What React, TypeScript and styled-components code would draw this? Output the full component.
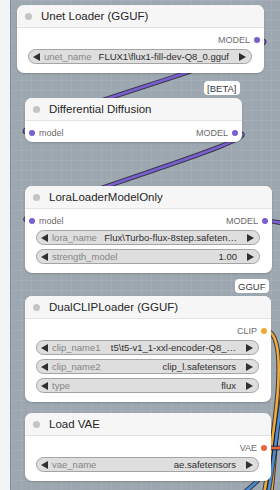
import React from "react";
import styled, { createGlobalStyle } from "styled-components";

const GlobalStyle = createGlobalStyle`
  html, body { margin: 0; padding: 0; }
  body {
    width: 280px;
    height: 490px;
    overflow: hidden;
    font-family: "Liberation Sans", Arial, sans-serif;
  }
`;

const Page = styled.div`
  display: flex;
  width: 280px;
  height: 490px;
`;

const Sidebar = styled.div`
  width: 10px;
  flex-shrink: 0;
  background: #f3f4f4;
  border-right: 1px solid #7e8891;
`;

const Canvas = styled.div`
  position: relative;
  flex: 1;
  overflow: hidden;
  background-color: #9da7b0;
  background-image:
    linear-gradient(rgba(255, 255, 255, 0.07) 1px, transparent 1px),
    linear-gradient(90deg, rgba(255, 255, 255, 0.07) 1px, transparent 1px);
  background-size: 10px 10px;
`;

const Wires = styled.svg`
  position: absolute;
  left: 0;
  top: 0;
  width: 269px;
  height: 490px;
`;

const NodeBox = styled.div<{ $x: number; $y: number; $w: number }>`
  position: absolute;
  left: ${(p) => p.$x - 11}px;
  top: ${(p) => p.$y}px;
  width: ${(p) => p.$w}px;
  background: #ffffff;
  border-radius: 7px;
  box-shadow: 0 1px 2px rgba(0, 0, 0, 0.18);
  display: flex;
  flex-direction: column;
`;

const Title = styled.div`
  height: 23px;
  display: flex;
  align-items: center;
  padding-left: 8px;
  gap: 9px;
  background: #f6f6f6;
  border-bottom: 1px solid #e2e2e2;
  border-radius: 7px 7px 0 0;
  box-sizing: border-box;
`;

const TitleDot = styled.span`
  width: 7px;
  height: 7px;
  border-radius: 50%;
  background: #c4c4c4;
`;

const TitleText = styled.span`
  font-size: 11.5px;
  color: #262626;
  white-space: nowrap;
`;

const Body = styled.div<{ $pb: number }>`
  display: flex;
  flex-direction: column;
  padding: 5px 0 ${(p) => p.$pb}px;
`;

const SlotRow = styled.div`
  height: 14px;
  display: flex;
  align-items: center;
  justify-content: space-between;
  padding: 0 4px;
  margin-bottom: 2px;
`;

const Slot = styled.div`
  display: flex;
  align-items: center;
  gap: 4px;
  font-size: 9px;
  color: #6b6b6b;
`;

const SlotDot = styled.span<{ $c: string }>`
  width: 6px;
  height: 6px;
  border-radius: 50%;
  background: ${(p) => p.$c};
`;

const Widget = styled.div`
  height: 15px;
  box-sizing: border-box;
  margin: 0 12px 4px 11px;
  border: 1px solid #a4a4a4;
  background: #dedede;
  border-radius: 8px;
  display: flex;
  align-items: center;
  font-size: 9.5px;
  white-space: nowrap;
  &:last-child { margin-bottom: 0; }
`;

const Arrow = styled.svg<{ $side: "l" | "r" }>`
  width: 7px;
  height: 8px;
  flex-shrink: 0;
  margin: ${(p) => (p.$side === "l" ? "0 4px 0 4px" : "0 5px 0 10px")};
`;

const WLabel = styled.span`
  color: #858585;
`;

const WValue = styled.span`
  flex: 1;
  text-align: right;
  color: #2e2e2e;
  margin-left: 4px;
`;

const Badge = styled.div`
  position: absolute;
  right: 2px;
  bottom: calc(100% + 3px);
  height: 14px;
  padding: 0 3.5px;
  background: #ffffff;
  border-radius: 4px;
  font-size: 9.5px;
  color: #3a3a3a;
  display: flex;
  align-items: center;
`;

type W = { label: string; value: string };
type N = {
  title: string;
  x: number;
  y: number;
  w: number;
  input?: { name: string; color: string };
  output: { name: string; color: string };
  widgets: W[];
  badge?: string;
};

const PURPLE = "#7a5fd0";
const ORANGE = "#f0aa34";
const VAE = "#e8663f";

const nodes: N[] = [
  {
    title: "Unet Loader (GGUF)",
    x: 17,
    y: 5,
    w: 247,
    output: { name: "MODEL", color: PURPLE },
    widgets: [{ label: "unet_name", value: "FLUX1\\flux1-fill-dev-Q8_0.gguf" }],
  },
  {
    title: "Differential Diffusion",
    x: 25,
    y: 98,
    w: 217,
    input: { name: "model", color: PURPLE },
    output: { name: "MODEL", color: PURPLE },
    widgets: [],
    badge: "[BETA]",
  },
  {
    title: "LoraLoaderModelOnly",
    x: 25,
    y: 186,
    w: 247,
    input: { name: "model", color: PURPLE },
    output: { name: "MODEL", color: PURPLE },
    widgets: [
      { label: "lora_name", value: "Flux\\Turbo-flux-8step.safeten…" },
      { label: "strength_model", value: "1.00" },
    ],
  },
  {
    title: "DualCLIPLoader (GGUF)",
    x: 25,
    y: 296,
    w: 246,
    output: { name: "CLIP", color: ORANGE },
    widgets: [
      { label: "clip_name1", value: "t5\\t5-v1_1-xxl-encoder-Q8_…" },
      { label: "clip_name2", value: "clip_l.safetensors" },
      { label: "type", value: "flux" },
    ],
    badge: "GGUF",
  },
  {
    title: "Load VAE",
    x: 25,
    y: 413,
    w: 246,
    output: { name: "VAE", color: VAE },
    widgets: [{ label: "vae_name", value: "ae.safetensors" }],
  },
];

const Left = () => (
  <Arrow $side="l" viewBox="0 0 7 8">
    <polygon points="7,0 7,8 0,4" fill="#2f2f2f" />
  </Arrow>
);
const Right = () => (
  <Arrow $side="r" viewBox="0 0 7 8">
    <polygon points="0,0 0,8 7,4" fill="#2f2f2f" />
  </Arrow>
);

const Wire = ({ d, c }: { d: string; c: string }) => (
  <g fill="none">
    <path d={d} stroke="rgba(20,20,40,0.75)" strokeWidth={4.6} />
    <path d={d} stroke={c} strokeWidth={2.6} />
  </g>
);

const Node = ({ n }: { n: N }) => (
  <NodeBox $x={n.x} $y={n.y} $w={n.w}>
    {n.badge && <Badge>{n.badge}</Badge>}
    <Title>
      <TitleDot />
      <TitleText>{n.title}</TitleText>
    </Title>
    <Body $pb={n.widgets.length ? 9 : 0}>
      <SlotRow>
        <Slot>
          {n.input && (
            <>
              <SlotDot $c={n.input.color} />
              {n.input.name}
            </>
          )}
        </Slot>
        <Slot>
          {n.output.name}
          <SlotDot $c={n.output.color} />
        </Slot>
      </SlotRow>
      {n.widgets.map((w) => (
        <Widget key={w.label}>
          <Left />
          <WLabel>{w.label}</WLabel>
          <WValue>{w.value}</WValue>
          <Right />
        </Widget>
      ))}
    </Body>
  </NodeBox>
);

export default function App() {
  return (
    <>
      <GlobalStyle />
      <Page>
        <Sidebar />
        <Canvas>
          <Wires viewBox="11 0 269 490">
            <Wire d="M257 40 C318 40, -29 133, 32 133" c={PURPLE} />
            <Wire d="M236 133 C291 133, -23 221, 32 221" c={PURPLE} />
            <Wire d="M265 221 C282 221, 288 226, 300 230" c={PURPLE} />
            <Wire d="M286 300 C280 370, 278 430, 271 495" c={ORANGE} />
            <Wire d="M264 330 C290 330, 276 420, 264 495" c={ORANGE} />
            <Wire d="M290 345 C279 410, 275 455, 268 495" c="#4a8fd6" />
            <Wire d="M262 476 C255 484, 248 490, 238 497" c="#4a8fd6" />
            <Wire d="M264 448 L290 448" c={VAE} />
          </Wires>
          {nodes.map((n) => (
            <Node key={n.title} n={n} />
          ))}
        </Canvas>
      </Page>
    </>
  );
}
